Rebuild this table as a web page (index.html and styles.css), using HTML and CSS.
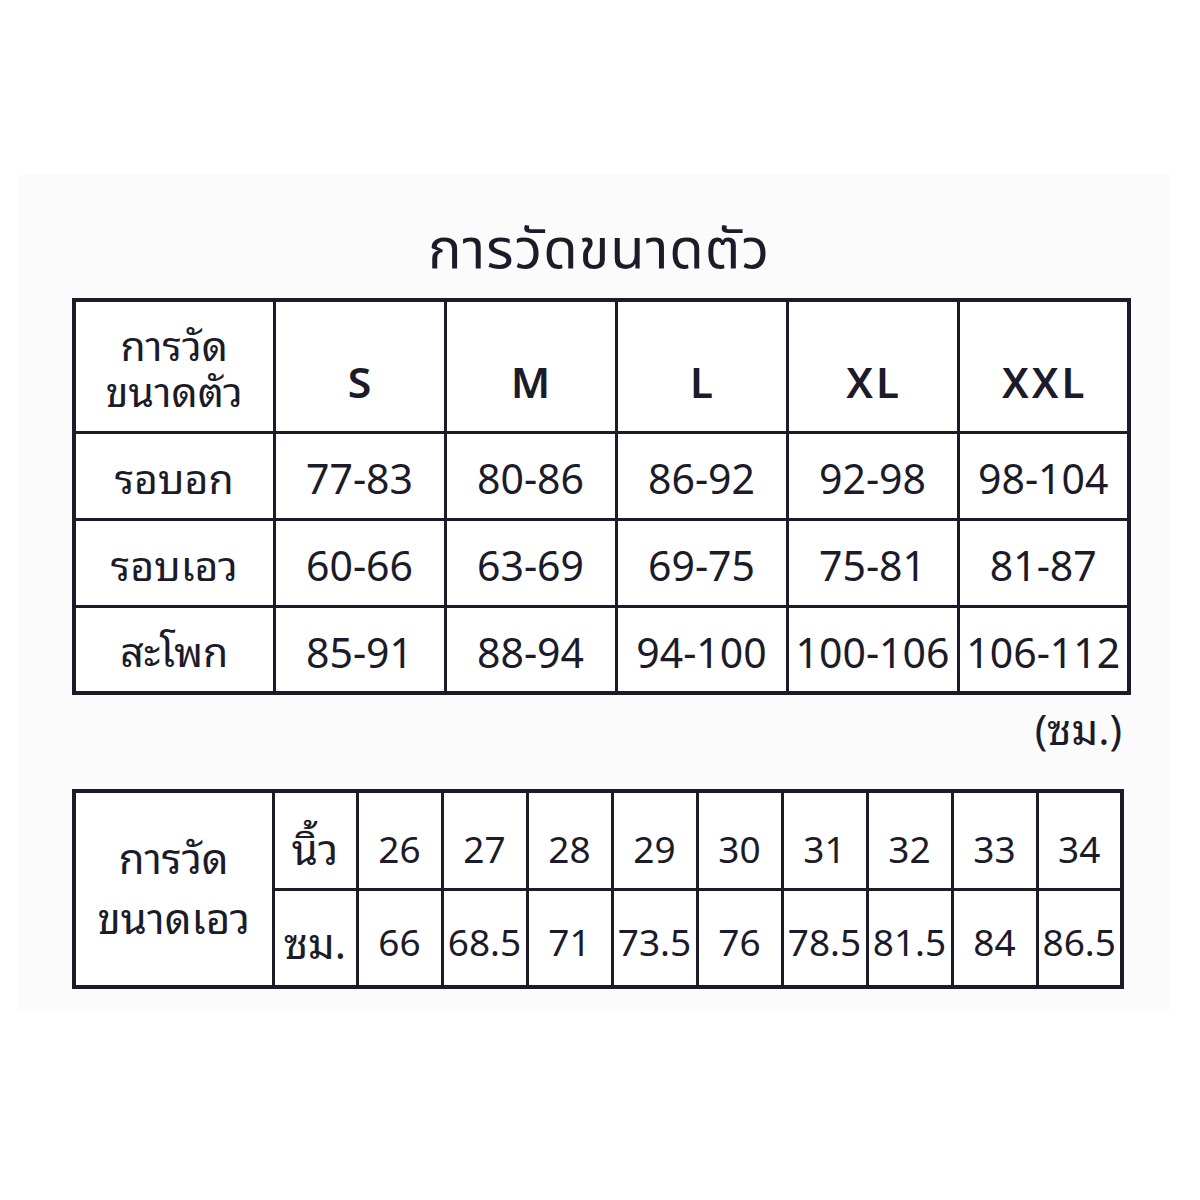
FILE: index.html
```html
<!DOCTYPE html>
<html lang="th">
<head>
<meta charset="utf-8">
<title>การวัดขนาดตัว</title>
<link rel="stylesheet" href="styles.css">
</head>
<body>
<div class="sheet">
  <h1 class="title">การวัดขนาดตัว</h1>
  <table class="chart body-chart">
    <colgroup>
      <col class="c-label"><col class="c-size"><col class="c-size"><col class="c-size"><col class="c-size"><col class="c-size">
    </colgroup>
    <tr class="head">
      <th class="label"><span class="line">การวัด</span><span class="line">ขนาดตัว</span></th>
      <th class="size">S</th>
      <th class="size">M</th>
      <th class="size">L</th>
      <th class="size">XL</th>
      <th class="size">XXL</th>
    </tr>
    <tr class="row">
      <th class="label">รอบอก</th>
      <td>77-83</td><td>80-86</td><td>86-92</td><td>92-98</td><td>98-104</td>
    </tr>
    <tr class="row">
      <th class="label">รอบเอว</th>
      <td>60-66</td><td>63-69</td><td>69-75</td><td>75-81</td><td>81-87</td>
    </tr>
    <tr class="row">
      <th class="label">สะโพก</th>
      <td>85-91</td><td>88-94</td><td>94-100</td><td>100-106</td><td>106-112</td>
    </tr>
  </table>
  <div class="unit">(ซม.)</div>
  <table class="chart waist-chart">
    <colgroup>
      <col class="w-label"><col class="w-unit">
      <col class="w-n"><col class="w-n"><col class="w-n"><col class="w-n"><col class="w-n"><col class="w-n"><col class="w-n"><col class="w-n"><col class="w-n">
    </colgroup>
    <tr class="inch">
      <th class="label" rowspan="2"><span class="line">การวัด</span><span class="line">ขนาดเอว</span></th>
      <th class="unit-cell">นิ้ว</th>
      <td>26</td><td>27</td><td>28</td><td>29</td><td>30</td><td>31</td><td>32</td><td>33</td><td>34</td>
    </tr>
    <tr class="cm">
      <th class="unit-cell">ซม.</th>
      <td>66</td><td>68.5</td><td>71</td><td>73.5</td><td>76</td><td>78.5</td><td>81.5</td><td>84</td><td>86.5</td>
    </tr>
  </table>
</div>
</body>
</html>
```
FILE: styles.css
```css
html, body {
  margin: 0;
  padding: 0;
  background: #ffffff;
}
body {
  font-family: "Noto Sans Thai Looped", "Noto Sans", "Noto Sans Thai", "DejaVu Sans", sans-serif;
  color: #1b1b29;
}
.sheet {
  margin: 175px 30px 0 18px;
  padding: 38px 0 22px 54px;
  background: #fbfbfb;
  width: 1098px;
}
.title {
  margin: 0 0 8px 0;
  font-family: "Noto Sans Thai", "Noto Sans", sans-serif;
  font-weight: 400;
  font-size: 56px;
  line-height: 77px;
  letter-spacing: 1px;
  text-align: center;
  width: 1054px;
}
.chart {
  border-collapse: collapse;
  table-layout: fixed;
  border: 4px solid #1b1b29;
  background: #ffffff;
}
.chart th, .chart td {
  border: 3px solid #1b1b29;
  padding: 0;
  text-align: center;
  font-weight: 400;
}
.line { display: block; }
.body-chart { width: 1054px; }
.c-label { width: 200px; }
.c-size { width: 171px; }
.body-chart .head { height: 132px; }
.body-chart .row { height: 87px; }
.body-chart td { font-size: 41px; }
.body-chart .label { font-size: 41px; line-height: 46px; }
.body-chart .size {
  vertical-align: bottom;
  padding-bottom: 18px;
  font-size: 42px;
  font-weight: 600;
  letter-spacing: 3px;
  text-indent: 3px;
}
.unit {
  width: 1050px;
  text-align: right;
  font-size: 42px;
  line-height: 50px;
  margin: 6px 0 38px 0;
}
.waist-chart { width: 1052px; }
.waist-chart tr { height: 98px; }
.w-label { width: 199px; }
.w-unit { width: 84px; }
.w-n { width: 85px; }
.waist-chart td { font-size: 37px; }
.waist-chart .inch td, .waist-chart .inch .unit-cell { padding-top: 12px; }
.waist-chart .cm td, .waist-chart .cm .unit-cell { padding-top: 4px; }
.waist-chart .label { font-size: 42px; line-height: 60px; padding-bottom: 8px; }
.waist-chart .unit-cell { font-size: 42px; }
```
